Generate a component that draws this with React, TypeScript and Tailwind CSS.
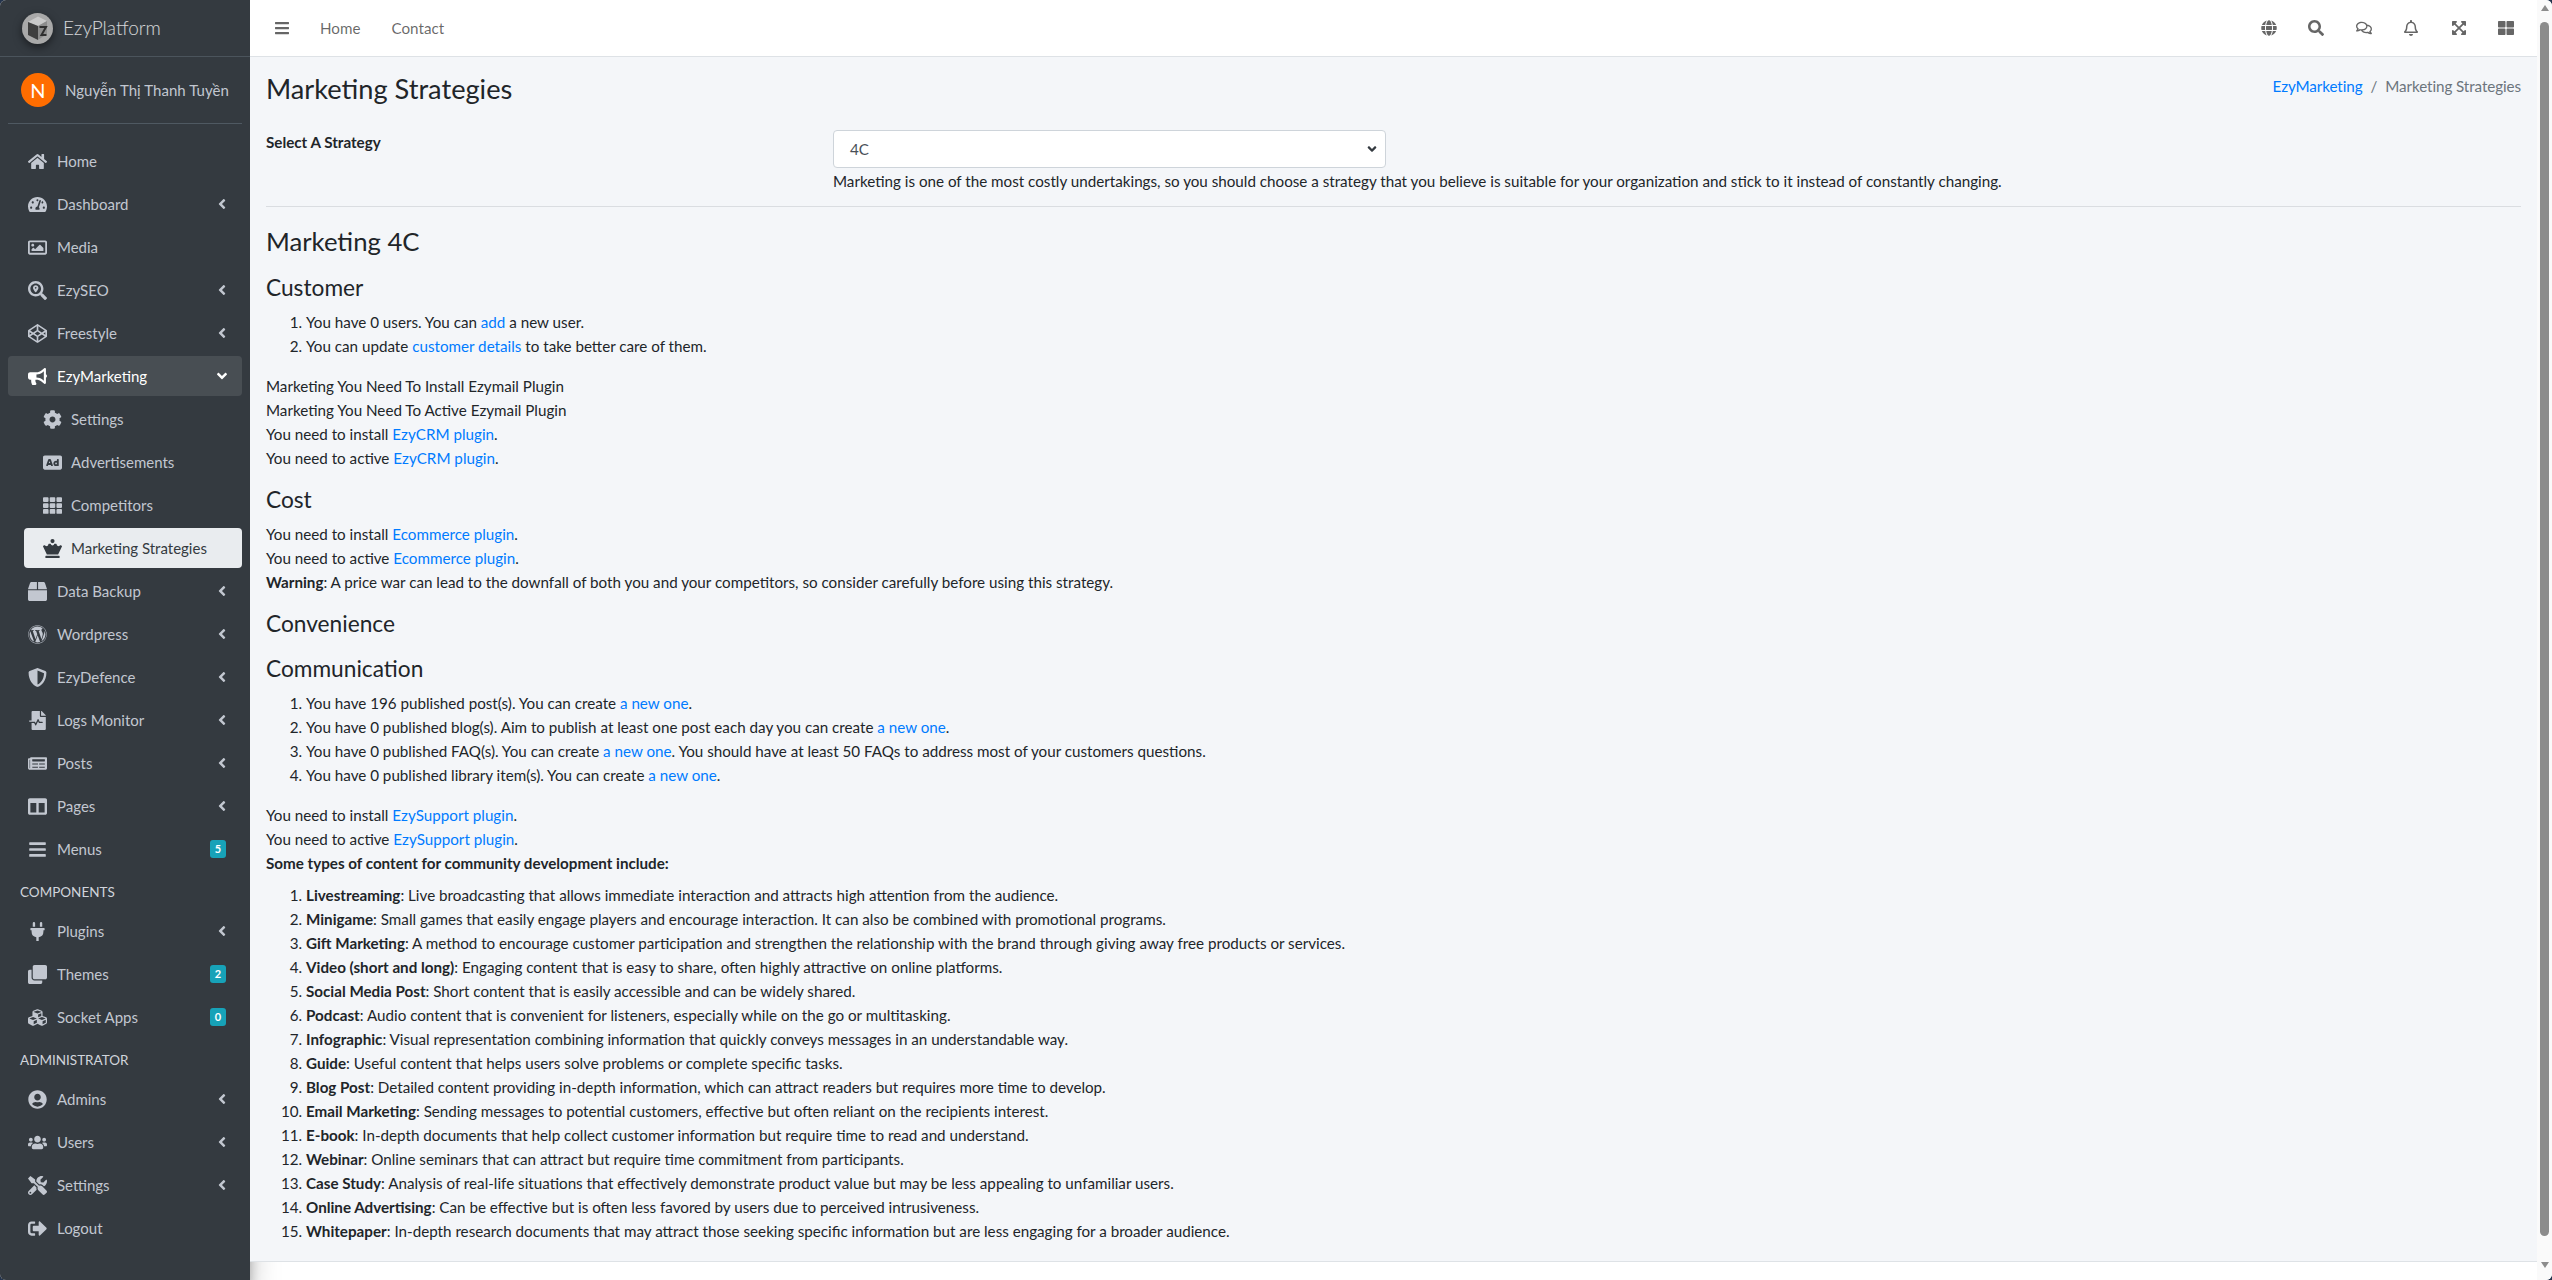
import type { ReactNode } from "react";
import type { IconType } from "react-icons";
import {
  FaAd,
  FaAngleDown,
  FaAngleLeft,
  FaBars,
  FaBox,
  FaBullhorn,
  FaChessQueen,
  FaClone,
  FaCodepen,
  FaCog,
  FaColumns,
  FaCubes,
  FaExpandArrowsAlt,
  FaFileMedicalAlt,
  FaGlobe,
  FaHome,
  FaNewspaper,
  FaPlug,
  FaRegBell,
  FaRegComments,
  FaRegImage,
  FaSearch,
  FaSearchLocation,
  FaShieldAlt,
  FaSignOutAlt,
  FaTachometerAlt,
  FaTh,
  FaThLarge,
  FaTools,
  FaUserCircle,
  FaUsers,
  FaWordpress,
} from "react-icons/fa";

const font = "font-['Lato','Noto_Sans',sans-serif]";

type NavEntry = {
  label: string;
  icon: IconType;
  arrow?: boolean;
  badge?: string;
  open?: boolean;
  sub?: boolean;
  active?: boolean;
};

const mainNav: NavEntry[] = [
  { label: "Home", icon: FaHome },
  { label: "Dashboard", icon: FaTachometerAlt, arrow: true },
  { label: "Media", icon: FaRegImage },
  { label: "EzySEO", icon: FaSearchLocation, arrow: true },
  { label: "Freestyle", icon: FaCodepen, arrow: true },
  { label: "EzyMarketing", icon: FaBullhorn, open: true },
  { label: "Settings", icon: FaCog, sub: true },
  { label: "Advertisements", icon: FaAd, sub: true },
  { label: "Competitors", icon: FaTh, sub: true },
  { label: "Marketing Strategies", icon: FaChessQueen, sub: true, active: true },
  { label: "Data Backup", icon: FaBox, arrow: true },
  { label: "Wordpress", icon: FaWordpress, arrow: true },
  { label: "EzyDefence", icon: FaShieldAlt, arrow: true },
  { label: "Logs Monitor", icon: FaFileMedicalAlt, arrow: true },
  { label: "Posts", icon: FaNewspaper, arrow: true },
  { label: "Pages", icon: FaColumns, arrow: true },
  { label: "Menus", icon: FaBars, badge: "5" },
];

const componentNav: NavEntry[] = [
  { label: "Plugins", icon: FaPlug, arrow: true },
  { label: "Themes", icon: FaClone, badge: "2" },
  { label: "Socket Apps", icon: FaCubes, badge: "0" },
];

const adminNav: NavEntry[] = [
  { label: "Admins", icon: FaUserCircle, arrow: true },
  { label: "Users", icon: FaUsers, arrow: true },
  { label: "Settings", icon: FaTools, arrow: true },
  { label: "Logout", icon: FaSignOutAlt },
];

const contentTypes = [
  ["Livestreaming", ": Live broadcasting that allows immediate interaction and attracts high attention from the audience."],
  ["Minigame", ": Small games that easily engage players and encourage interaction. It can also be combined with promotional programs."],
  ["Gift Marketing", ": A method to encourage customer participation and strengthen the relationship with the brand through giving away free products or services."],
  ["Video (short and long)", ": Engaging content that is easy to share, often highly attractive on online platforms."],
  ["Social Media Post", ": Short content that is easily accessible and can be widely shared."],
  ["Podcast", ": Audio content that is convenient for listeners, especially while on the go or multitasking."],
  ["Infographic", ": Visual representation combining information that quickly conveys messages in an understandable way."],
  ["Guide", ": Useful content that helps users solve problems or complete specific tasks."],
  ["Blog Post", ": Detailed content providing in-depth information, which can attract readers but requires more time to develop."],
  ["Email Marketing", ": Sending messages to potential customers, effective but often reliant on the recipients interest."],
  ["E-book", ": In-depth documents that help collect customer information but require time to read and understand."],
  ["Webinar", ": Online seminars that can attract but require time commitment from participants."],
  ["Case Study", ": Analysis of real-life situations that effectively demonstrate product value but may be less appealing to unfamiliar users."],
  ["Online Advertising", ": Can be effective but is often less favored by users due to perceived intrusiveness."],
  ["Whitepaper", ": In-depth research documents that may attract those seeking specific information but are less engaging for a broader audience."],
];

function NavItem({ entry }: { entry: NavEntry }) {
  const Icon = entry.icon;
  const tone = entry.active
    ? "bg-[#e9ecef] text-[#343a40]"
    : entry.open
      ? "bg-white/10 text-white"
      : "text-[#c2c7d0]";
  return (
    <div
      className={`mb-[3px] flex h-10 items-center rounded-[4px] pr-4 ${tone} ${entry.sub ? "ml-4 pl-[17px]" : "pl-[18px]"}`}
    >
      <span className="flex w-[22px] shrink-0 justify-center">
        <Icon className="text-[19px]" />
      </span>
      <span className={`${entry.sub ? "ml-2" : "ml-[9px]"} flex-1 text-[15px]`}>{entry.label}</span>
      {entry.arrow && <FaAngleLeft className="-mr-1 text-[16px]" />}
      {entry.open && <FaAngleDown className="-mr-1 text-[16px]" />}
      {entry.badge && (
        <span className="flex h-[18px] w-4 items-center justify-center rounded-[3px] bg-[#17a2b8] text-[11px] font-bold text-white">
          {entry.badge}
        </span>
      )}
    </div>
  );
}

function Logo() {
  return (
    <svg width="33" height="33" viewBox="0 0 33 33" className="drop-shadow-[0_3px_4px_rgba(0,0,0,0.5)]">
      <circle cx="16.5" cy="16.5" r="15.5" fill="#a9a9a9" />
      <path d="M7 10 L17 4.5 L26 9 L17 14 Z" fill="#c9c9c9" />
      <path d="M7 10 L17 14 L17 28 L7 23 Z" fill="#3f3f3f" />
      <path d="M17 14 L26 9 L26 22 L17 28 Z" fill="#8c8c8c" />
      <path d="M18.5 15 H25 L20.5 23 H25.5" fill="none" stroke="#2f2f2f" strokeWidth="2" />
    </svg>
  );
}

function Sidebar() {
  return (
    <aside className="flex w-[250px] shrink-0 flex-col bg-[#343a40] shadow-[0_14px_28px_rgba(0,0,0,0.25),0_10px_10px_rgba(0,0,0,0.22)]">
      <div className="flex h-[57px] shrink-0 items-center gap-[9px] border-b border-[#4b545c] pl-[21px]">
        <Logo />
        <span className="text-[19px] font-light text-white/80">EzyPlatform</span>
      </div>
      <div className="mx-2 flex h-[67px] shrink-0 items-center gap-[10px] border-b border-[#4f5962] pl-[13px] pb-[1px]">
        <span className="flex h-[34px] w-[34px] items-center justify-center rounded-full bg-[#ff6d00] text-[20px] text-white">N</span>
        <span className="text-[15px] tracking-[0.05px] text-[#c2c7d0]">Nguyễn Thị Thanh Tuyền</span>
      </div>
      <nav className="flex flex-col px-2 pt-[17px]">
        {mainNav.map((entry) => (
          <NavItem key={entry.label} entry={entry} />
        ))}
        <div className="flex h-[39px] items-center pl-3 text-[13.5px] text-[#d0d4db]">COMPONENTS</div>
        {componentNav.map((entry) => (
          <NavItem key={entry.label} entry={entry} />
        ))}
        <div className="flex h-[39px] items-center pl-3 text-[13.5px] text-[#d0d4db]">ADMINISTRATOR</div>
        {adminNav.map((entry) => (
          <NavItem key={entry.label} entry={entry} />
        ))}
      </nav>
    </aside>
  );
}

function TopBar() {
  const right = [FaGlobe, FaSearch, FaRegComments, FaRegBell, FaExpandArrowsAlt, FaThLarge];
  return (
    <header className="flex h-[57px] shrink-0 items-center border-b border-[#dee2e6] bg-white pl-[24px] pr-[7px] text-[#00000099]">
      <FaBars className="text-[16px]" />
      <span className="ml-[30px] text-[15.2px]">Home</span>
      <span className="ml-[31px] text-[15.2px]">Contact</span>
      <div className="ml-auto flex items-center">
        {right.map((Icon, i) => (
          <span key={i} className="flex h-10 w-[47.5px] items-center justify-center">
            <Icon className="text-[16px]" />
          </span>
        ))}
      </div>
    </header>
  );
}

function A({ children }: { children: ReactNode }) {
  return <span className="text-[#007bff]">{children}</span>;
}

function SectionTitle({ children, className }: { children: ReactNode; className: string }) {
  return <h4 className={`mb-2 text-[22.7px] leading-[29px] font-normal ${className}`}>{children}</h4>;
}

function Scrollbar() {
  return (
    <div className="flex w-[15px] shrink-0 flex-col items-center bg-[#fafafa]">
      <div className="mt-[5px] h-0 w-0 border-x-[4.5px] border-b-[6px] border-x-transparent border-b-[#8c8c8c]" />
      <div className="mt-[11px] h-[1214px] w-[9px] rounded-full bg-[#8c8c8c]" />
      <div className="mt-[26px] h-0 w-0 border-x-[4.5px] border-t-[6px] border-x-transparent border-t-[#8c8c8c]" />
    </div>
  );
}

export default function App() {
  return (
    <div className="h-[1280px] w-[2552px] bg-[#24344d]">
      <div className={`flex h-full w-full overflow-hidden rounded-[6px] bg-white text-[15.2px] leading-6 text-[#212529] ${font}`}>
        <Sidebar />
        <main className="flex min-w-0 flex-1 flex-col">
          <TopBar />
          <div className="h-[1205px] shrink-0 border-b border-[#dee2e6] bg-[#f4f6f9] px-4">
            <div className="flex items-start justify-between pt-[14px]">
              <h1 className="text-[27.2px] leading-[35px] font-normal">Marketing Strategies</h1>
              <div className="flex gap-2 pt-[3px] tracking-[-0.08px]">
                <A>EzyMarketing</A>
                <span className="text-[#6c757d]">/</span>
                <span className="text-[#6c757d]">Marketing Strategies</span>
              </div>
            </div>
            <div className="flex pt-[24px] pb-[13px]">
              <label className="w-[567px] font-bold">Select A Strategy</label>
              <div className="flex-1">
                <div className="flex h-[38px] w-[553px] items-center justify-between rounded-[4px] border border-[#ced4da] bg-white pr-[6px] pl-4 text-[#495057]">
                  4C
                  <FaAngleDown className="text-[14px] text-[#343a40]" />
                </div>
                <p className="pt-[1px]">
                  Marketing is one of the most costly undertakings, so you should choose a strategy that you believe is suitable for your organization and stick to it instead of constantly changing.
                </p>
              </div>
            </div>
            <hr className="border-[#dadde1]" />
            <h3 className="mt-[17px] mb-2 text-[25.7px] leading-[34px] font-normal">Marketing 4C</h3>
            <SectionTitle className="mt-[15px]">Customer</SectionTitle>
            <ol className="mb-4 list-decimal pl-10">
              <li>
                You have 0 users. You can <A>add</A> a new user.
              </li>
              <li>
                You can update <A>customer details</A> to take better care of them.
              </li>
            </ol>
            <p>Marketing You Need To Install Ezymail Plugin</p>
            <p>Marketing You Need To Active Ezymail Plugin</p>
            <p>
              You need to install <A>EzyCRM plugin</A>.
            </p>
            <p>
              You need to active <A>EzyCRM plugin</A>.
            </p>
            <SectionTitle className="mt-[15px]">Cost</SectionTitle>
            <p>
              You need to install <A>Ecommerce plugin</A>.
            </p>
            <p>
              You need to active <A>Ecommerce plugin</A>.
            </p>
            <p>
              <b>Warning</b>: A price war can lead to the downfall of both you and your competitors, so consider carefully before using this strategy.
            </p>
            <SectionTitle className="mt-[15px]">Convenience</SectionTitle>
            <SectionTitle className="mt-[16px]">Communication</SectionTitle>
            <ol className="mb-4 list-decimal pl-10">
              <li>
                You have 196 published post(s). You can create <A>a new one</A>.
              </li>
              <li>
                You have 0 published blog(s). Aim to publish at least one post each day you can create <A>a new one</A>.
              </li>
              <li>
                You have 0 published FAQ(s). You can create <A>a new one</A>. You should have at least 50 FAQs to address most of your customers questions.
              </li>
              <li>
                You have 0 published library item(s). You can create <A>a new one</A>.
              </li>
            </ol>
            <p>
              You need to install <A>EzySupport plugin</A>.
            </p>
            <p>
              You need to active <A>EzySupport plugin</A>.
            </p>
            <p className="font-bold">Some types of content for community development include:</p>
            <ol className="mt-2 list-decimal pl-10">
              {contentTypes.map(([title, rest]) => (
                <li key={title}>
                  <b>{title}</b>
                  {rest}
                </li>
              ))}
            </ol>
          </div>
        </main>
        <Scrollbar />
      </div>
    </div>
  );
}
